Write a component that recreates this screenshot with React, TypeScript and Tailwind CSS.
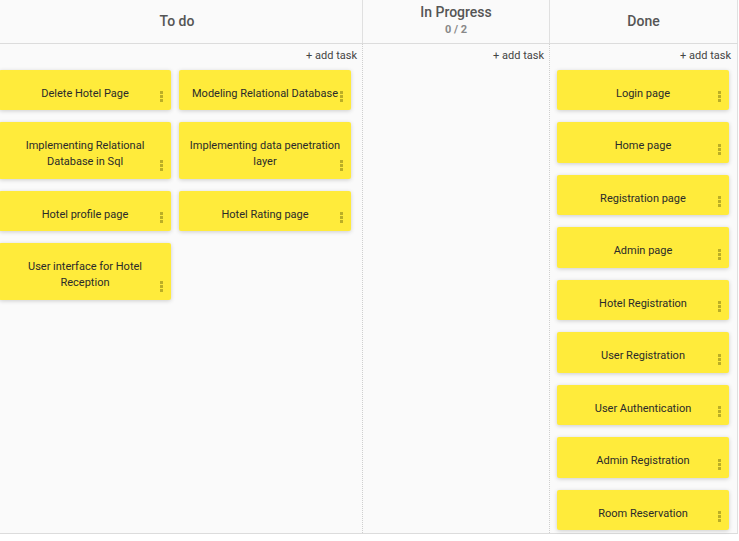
import React from "react";

const todo = [
  ["Delete Hotel Page", "Modeling Relational Database"],
  ["Implementing Relational Database in Sql", "Implementing data penetration layer"],
  ["Hotel profile page", "Hotel Rating page"],
  ["User interface for Hotel Reception"],
];

const done = [
  "Login page",
  "Home page",
  "Registration page",
  "Admin page",
  "Hotel Registration",
  "User Registration",
  "User Authentication",
  "Admin Registration",
  "Room Reservation",
];

function Dots() {
  return (
    <svg width="3" height="11" viewBox="0 0 3 11" className="absolute right-[8px] bottom-[8px]">
      <rect x="0" y="0" width="3" height="3" fill="rgba(60,60,0,0.35)" />
      <rect x="0" y="4" width="3" height="3" fill="rgba(60,60,0,0.35)" />
      <rect x="0" y="8" width="3" height="3" fill="rgba(60,60,0,0.35)" />
    </svg>
  );
}

function Card({ text }: { text: string }) {
  return (
    <div className="relative w-[172px] rounded-[2px] bg-[#ffeb3b] px-2 pt-4 pb-[8.5px] text-center text-[11px] leading-4 text-[#2a2a2a] shadow-[0_1px_4px_rgba(0,0,0,0.18)]">
      {text}
      <Dots />
    </div>
  );
}

function AddTask() {
  return (
    <div className="flex h-[25px] items-center justify-end pr-[5px] text-[11px] text-[#444]">
      + add task
    </div>
  );
}

export default function App() {
  return (
    <div className="h-[541px] w-[739px] bg-white" style={{ fontFamily: "Roboto, 'Liberation Sans', sans-serif" }}>
      <div className="h-[534px] w-[738px] border-b border-[#dcdcdc] bg-[#fafafa]">
        {/* header */}
        <div className="flex h-[44px] border-b border-[#dcdcdc]">
          <div className="flex w-[363px] items-center justify-center border-r border-[#e0e0e0] pr-2 text-[14px] font-medium text-[#555]">
            To do
          </div>
          <div className="flex w-[187px] flex-col items-center border-r border-[#e0e0e0] pt-[4px]">
            <div className="text-[14px] font-medium leading-4 text-[#555]">In Progress</div>
            <div className="mt-[4px] text-[11px] font-bold leading-3 text-[#888]">0 / 2</div>
          </div>
          <div className="flex w-[188px] items-center justify-center border-r border-[#e0e0e0] text-[14px] font-medium text-[#555]">
            Done
          </div>
        </div>
        {/* body */}
        <div className="flex h-[489px]">
          <div className="w-[363px] overflow-hidden border-r border-dotted border-[#cfcfcf]">
            <AddTask />
            <div className="ml-[-1px] flex flex-col gap-3 pt-[0.5px]">
              {todo.map((row, i) => (
                <div key={i} className="flex gap-2">
                  {row.map((t) => (
                    <Card key={t} text={t} />
                  ))}
                </div>
              ))}
            </div>
          </div>
          <div className="w-[187px] border-r border-dotted border-[#cfcfcf]">
            <AddTask />
          </div>
          <div className="w-[188px] border-r border-[#e0e0e0]">
            <div className="pr-[1px]">
              <AddTask />
            </div>
            <div className="flex flex-col gap-3 pl-[7px] pt-[0.5px]">
              {done.map((t) => (
                <Card key={t} text={t} />
              ))}
            </div>
          </div>
        </div>
      </div>
    </div>
  );
}
